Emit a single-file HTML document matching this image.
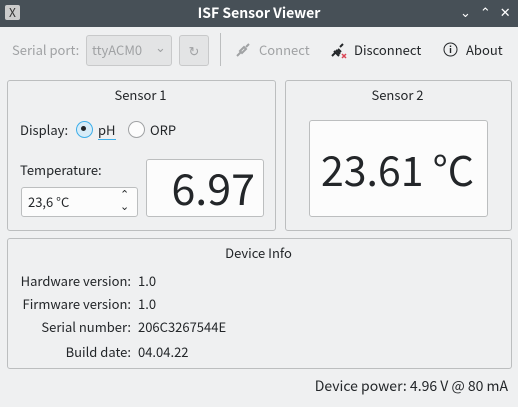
<!DOCTYPE html><html><head><style>
body{margin:0;width:518px;height:407px;background:#eff0f1;font-family:"Noto Sans CJK SC","Liberation Sans",sans-serif;font-size:13px;line-height:16px;color:#232629;position:relative;overflow:hidden}
.a{position:absolute}
.box{position:absolute;border:1px solid #bcbebf;border-radius:3px;background:#eff0f1}
.field{position:absolute;background:#fcfcfc;border:1px solid #bcbebf;border-radius:3px}
.r{text-align:right}
</style></head><body>
<div class="a" style="left:0;top:0;width:518px;height:27px;background:#475057"></div>
<div class="a" style="left:5px;top:5px;width:15px;height:15px;background:#ccc;border-radius:2px;color:#333;font-size:12px;line-height:15px;text-align:center">X</div>
<div class="a" style="left:0;top:5px;width:518px;text-align:center;color:#fff;font-weight:bold;font-size:14px">ISF Sensor Viewer</div>
<div class="a" style="left:460px;top:4px;color:#fff;font-size:13px;letter-spacing:9px">⌄⌃✕</div>

<div class="a" style="left:12px;top:42px;color:#a0a2a4">Serial port:</div>
<div class="a" style="left:86px;top:35px;width:84px;height:29px;border:1px solid #c8c9ca;border-radius:3px;background:#e3e4e5"></div>
<div class="a" style="left:92px;top:42px;color:#a0a2a4">ttyACM0</div>
<div class="a" style="left:155px;top:39px;color:#a0a2a4">⌄</div>
<div class="a" style="left:179px;top:35px;width:28px;height:29px;border:1px solid #c8c9ca;border-radius:3px;background:#e3e4e5;color:#a0a2a4;text-align:center;line-height:29px">↻</div>
<div class="a" style="left:220px;top:33px;width:1px;height:33px;background:#bcbebf"></div>
<svg class="a" style="left:236px;top:43px" width="14" height="14"><path d="M1 13L5 9M4 8l4-4 2 2-4 4zM10 4l3-3" stroke="#a0a2a4" stroke-width="2" fill="none"/></svg>
<div class="a" style="left:259px;top:42px;color:#a0a2a4">Connect</div>
<svg class="a" style="left:331px;top:43px" width="16" height="16"><path d="M1 13L4 10M3 8l5 5M5 7l4 4M9 4l3-3M7 6l3 3" stroke="#232629" stroke-width="2" fill="none"/><path d="M11 11l4 4M15 11l-4 4" stroke="#da4453" stroke-width="1.5"/></svg>
<div class="a" style="left:354px;top:42px">Disconnect</div>
<svg class="a" style="left:443px;top:42px" width="15" height="15"><circle cx="7.5" cy="7.5" r="6.5" stroke="#232629" fill="none"/><path d="M7.5 6v5M7.5 3.5v1.5" stroke="#232629" stroke-width="1.4"/></svg>
<div class="a" style="left:466px;top:42px">About</div>

<div class="box" style="left:7px;top:80px;width:267px;height:149px"></div>
<div class="a" style="left:7px;top:87px;width:267px;text-align:center">Sensor 1</div>
<div class="a" style="left:20px;top:122px">Display:</div>
<div class="a" style="left:76px;top:121px;width:15px;height:15px;border:1px solid #3daee9;border-radius:50%;background:#d7ecf8"></div>
<div class="a" style="left:81px;top:126px;width:5px;height:5px;border-radius:50%;background:#232629"></div>
<div class="a" style="left:98px;top:122px">pH</div>
<div class="a" style="left:98px;top:139px;width:18px;height:1px;background:#3daee9"></div>
<div class="a" style="left:128px;top:121px;width:15px;height:15px;border:1px solid #a0a2a4;border-radius:50%;background:#fcfcfc"></div>
<div class="a" style="left:150px;top:122px">ORP</div>
<div class="a" style="left:20px;top:162px">Temperature:</div>
<div class="field" style="left:21px;top:187px;width:115px;height:28px"></div>
<div class="a" style="left:28px;top:194px">23,6 °C</div>
<div class="a" style="left:120px;top:188px;font-size:11px;line-height:12px">⌃<br>⌄</div>
<div class="field" style="left:146px;top:159px;width:116px;height:56px"></div>
<div class="a r" style="left:146px;top:163px;width:109px;font-size:43px;line-height:48px">6.97</div>

<div class="box" style="left:285px;top:80px;width:225px;height:149px"></div>
<div class="a" style="left:285px;top:87px;width:225px;text-align:center">Sensor 2</div>
<div class="field" style="left:309px;top:120px;width:177px;height:95px"></div>
<div class="a" style="left:309px;top:143px;width:177px;text-align:center;font-size:41px;line-height:50px">23.61 °C</div>

<div class="box" style="left:7px;top:238px;width:503px;height:129px"></div>
<div class="a" style="left:7px;top:245px;width:503px;text-align:center">Device Info</div>
<div class="a r" style="left:0;top:273px;width:131px">Hardware version:</div><div class="a" style="left:138px;top:273px">1.0</div>
<div class="a r" style="left:0;top:296px;width:131px">Firmware version:</div><div class="a" style="left:138px;top:296px">1.0</div>
<div class="a r" style="left:0;top:319px;width:131px">Serial number:</div><div class="a" style="left:138px;top:319px">206C3267544E</div>
<div class="a r" style="left:0;top:344px;width:131px">Build date:</div><div class="a" style="left:138px;top:344px">04.04.22</div>

<div class="a r" style="left:0;top:378px;width:508px;font-size:14px;line-height:17px">Device power: 4.96 V @ 80 mA</div>
</body></html>
